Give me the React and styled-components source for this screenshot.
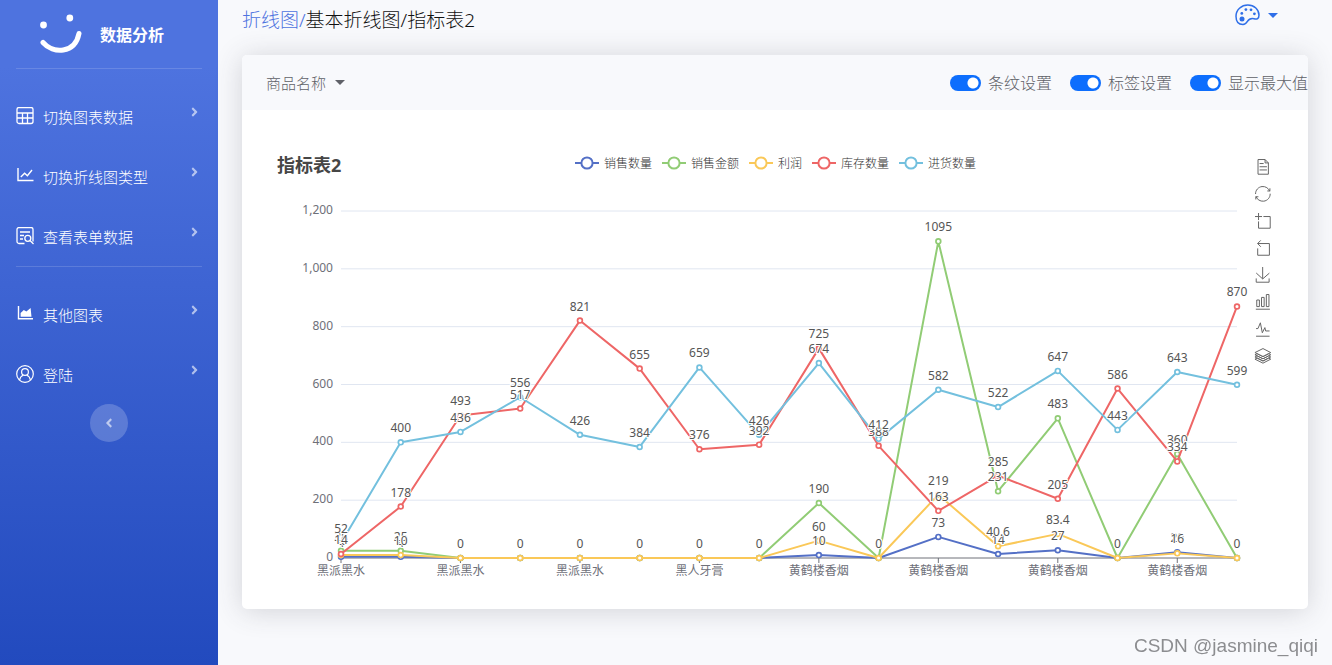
import React from 'react';
import styled, { createGlobalStyle } from 'styled-components';
import { FaAngleLeft, FaAngleRight } from 'react-icons/fa';

const categories = [
  '黑派黑水', '黑派黑水', '黑派黑水', '黑派黑水',
  '黑派黑水', '黑派黑水', '黑人牙膏', '黑人牙膏',
  '黄鹤楼香烟', '黄鹤楼香烟', '黄鹤楼香烟', '黄鹤楼香烟',
  '黄鹤楼香烟', '黄鹤楼香烟', '黄鹤楼香烟', '黄鹤楼香烟',
];

const series = [
  {
    name: '销售数量',
    color: '#5470c6',
    data: [4, 4, 0, 0, 0, 0, 0, 0, 10, 0, 73, 14, 27, 0, 20, 0],
  },
  {
    name: '销售金额',
    color: '#91cc75',
    data: [25, 25, 0, 0, 0, 0, 0, 0, 190, 0, 1095, 231, 483, 0, 360, 0],
  },
  {
    name: '利润',
    color: '#fac858',
    data: [10, 10, 0, 0, 0, 0, 0, 0, 60, 0, 219, 40.6, 83.4, 0, 16, 0],
  },
  {
    name: '库存数量',
    color: '#ee6666',
    data: [14, 178, 493, 517, 821, 655, 376, 392, 725, 388, 163, 285, 205, 586, 334, 870],
  },
  {
    name: '进货数量',
    color: '#73c0de',
    data: [52, 400, 436, 556, 426, 384, 659, 426, 674, 412, 582, 522, 647, 443, 643, 599],
  },
];

const tools = [
  {
    title: '数据视图',
    d: 'M17.5,17.3H33 M45.4,29.5h-28 M11.5,2v56H51V14.8L38.4,2H11.5z M38.4,2.2v12.7H51 M45.4,41.7h-28',
  },
  {
    title: '还原',
    d: 'M47,18.9h9.8V8.7 M56.3,20.1C52.1,9,40.5,0.6,26.8,2.1C12.6,3.7,1.6,16.2,2.1,30.6 M13,41.1H3.1v10.2 M3.7,39.9c4.2,11.1,15.8,19.5,29.5,18c14.2-1.6,25.2-14.1,24.7-28.5',
  },
  {
    title: '区域缩放',
    d: 'M0,13.5h26.9 M13.5,26.9V0 M32.1,13.5H58V58H13.5V32.1',
  },
  {
    title: '区域缩放还原',
    d: 'M22,1.4L9.9,13.5l12.3,12.3 M10.3,13.5H54.9v44.6H10.3v-26',
  },
  {
    title: '保存为图片',
    d: 'M4.7,22.9L29.3,45.5L54.7,23.4 M4.6,43.6L4.6,58L53.8,58L53.8,43.6 M29.2,45.1L29.2,0',
  },
  {
    title: '切换为柱状图',
    d: 'M6.7,22.9h10V48h-10V22.9z M24.9,13h10v35h-10V13z M43.2,2h10v46h-10V2z M3.1,58h53.7',
  },
  {
    title: '切换为折线图',
    d: 'M4.1,28.9h7.1l9.3-22l7.4,38l9.7-19.7l3,12.8h14.9 M4.1,58h51.4',
  },
  {
    title: '切换为堆叠',
    d: 'M8.2,38.4l-8.4,4.1l30.6,15.3L60,42.5l-8.1-4.1l-21.5,11L8.2,38.4z M51.9,30l-8.1,4.2l-13.4,6.9l-13.9-6.9L8.2,30l-8.4,4.2l8.4,4.2l22.2,11l21.5-11l8.1-4.2L51.9,30z M51.9,21.7l-8.1,4.2L35.7,30l-5.3,2.8L24.9,30l-8.4-4.1l-8.3-4.2l-8.4,4.2L8.2,30l8.3,4.2l13.9,6.9l13.4-6.9l8.1-4.2l8.1-4.1L51.9,21.7z M30.4,2.2L-0.2,17.5l8.4,4.1l8.3,4.2l8.4,4.2l5.5,2.7l5.3-2.7l8.1-4.2l8.1-4.2l8.1-4.1L30.4,2.2z',
  },
];

const switches = [
  { id: 'stripe', text: '条纹设置' },
  { id: 'label', text: '标签设置' },
  { id: 'max', text: '显示最大值' },
];

const TableIcon = () => (
  <svg width='18' height='18' viewBox='0 0 18 18' fill='none' stroke='currentColor' strokeWidth='1.3'>
    <rect x='1' y='0.5' width='16' height='16' rx='2' />
    <path d='M1 6h16 M1 11h16 M6.5 6v10.5 M11.5 6v10.5' />
  </svg>
);

const LineIcon = () => (
  <svg width='18' height='18' viewBox='0 0 18 18' fill='none' stroke='currentColor' strokeWidth='1.4'>
    <path d='M2 1v12.5h15.5' />
    <path d='M4.8 10L8.6 6.2l2.8 2.6 4.6-5.8' />
  </svg>
);

const AreaIcon = () => (
  <svg width='18' height='18' viewBox='0 0 18 18' fill='none' stroke='currentColor' strokeWidth='1.4'>
    <path d='M2.5 1v12.8H17' />
    <path d='M4.6 11.8V8l3.2-3 2.6 1.6L14.6 3l.9 8.8z' fill='currentColor' stroke='none' />
  </svg>
);

const FormSearchIcon = () => (
  <svg width='18' height='18' viewBox='0 0 18 18' fill='none' stroke='currentColor' strokeWidth='1.3'>
    <path d='M8.5 16.5H3a2 2 0 0 1-2-2v-12a2 2 0 0 1 2-2h12a2 2 0 0 1 2 2v12' />
    <path d='M4 5h10 M4 8.5h4 M4 12h3' />
    <circle cx='11.8' cy='11.3' r='3' />
    <path d='M14 13.5l3.5 3.5' />
  </svg>
);

const UserIcon = () => (
  <svg width='18' height='18' viewBox='0 0 18 18' fill='none' stroke='currentColor' strokeWidth='1.2'>
    <circle cx='9' cy='9' r='8.3' />
    <circle cx='9' cy='7' r='3.4' />
    <path d='M3.6 15c.4-2.4 1.8-4 3.6-4.7 M14.4 15c-.4-2.4-1.8-4-3.6-4.7' />
  </svg>
);

const PaletteIcon = () => (
  <svg width='25' height='22' viewBox='0 0 25 22' fill='none'>
    <path
      d='M8 20.5C3 20.5 1 16.5 1 12.2C1 6 6.4 1 12.8 1C19.3 1 24 5.6 24 11C24 14.8 22 15.4 19 14.7C15.6 13.9 14 15 12.4 17.4C11.2 19.4 10 20.5 8 20.5Z'
      stroke='currentColor'
      strokeWidth='1.5'
    />
    <g fill='currentColor'>
      <circle cx='7' cy='15' r='2.5' />
      <circle cx='6.8' cy='9.4' r='1.4' />
      <circle cx='10.9' cy='5.6' r='1.4' />
      <circle cx='16' cy='5.8' r='1.4' />
      <circle cx='19.4' cy='9.8' r='1.4' />
    </g>
  </svg>
);

const SmileLogo = () => (
  <svg width='42' height='42' viewBox='0 0 42 42' fill='none'>
    <circle cx='3.5' cy='12' r='3.4' fill='#fff' />
    <circle cx='29.8' cy='5' r='3.4' fill='#fff' />
    <path d='M3 29.5C13 41 35 41 39 20.5' stroke='#fff' strokeWidth='5' strokeLinecap='round' />
  </svg>
);

const NavEntry = ({ icon, text }) => (
  <NavButton type='button'>
    {icon}
    <span>{text}</span>
    <FaAngleRight className='arrow' />
  </NavButton>
);

// 绘图区坐标
const LEFT = 64;
const RIGHT = 960;
const BOTTOM = 358;
const HEIGHT = 347;
const MAX = 1200;
const xOf = (i) => LEFT + ((RIGHT - LEFT) * i) / (categories.length - 1);
const yOf = (v) => BOTTOM - (HEIGHT * v) / MAX;

const LineChart = () => (
  <Plot viewBox='0 0 974 390' role='img' aria-label='指标表2'>
    {[0, 200, 400, 600, 800, 1000, 1200].map((v) => (
      <g key={v}>
        {v > 0 && <line className='split' x1={LEFT} x2={RIGHT} y1={yOf(v)} y2={yOf(v)} />}
        <text className='axis' x={LEFT - 8} y={yOf(v) + 3} textAnchor='end'>
          {v.toLocaleString('en-US')}
        </text>
      </g>
    ))}
    <line className='base' x1={LEFT} x2={RIGHT} y1={BOTTOM} y2={BOTTOM} />
    {categories.map(
      (name, i) =>
        i % 2 === 0 && (
          <g key={i}>
            <line className='base' x1={xOf(i)} x2={xOf(i)} y1={BOTTOM} y2={BOTTOM + 5} />
            <text className='axis' x={xOf(i)} y={BOTTOM + 17} textAnchor='middle'>
              {name}
            </text>
          </g>
        )
    )}
    {series.map((s) => (
      <g key={s.name} stroke={s.color} strokeWidth='2'>
        <polyline
          fill='none'
          strokeLinejoin='bevel'
          points={s.data.map((v, i) => `${xOf(i)},${yOf(v)}`).join(' ')}
        />
        {s.data.map((v, i) => (
          <circle key={i} cx={xOf(i)} cy={yOf(v)} r='2.4' fill='#fff' strokeWidth='1.7' />
        ))}
      </g>
    ))}
    {/* 数值标签盖在所有折线之上 */}
    {series.map((s) =>
      s.data.map((v, i) => (
        <text className='value' key={s.name + i} x={xOf(i)} y={yOf(v) - 10} textAnchor='middle'>
          {v}
        </text>
      ))
    )}
  </Plot>
);

const App = () => {
  return (
    <>
      <GlobalStyle />
      <Page>
        <Sidebar>
          <Brand href='#'>
            <SmileLogo />
            数据分析
          </Brand>
          <Divider />
          <NavGroup>
            <NavEntry icon={<TableIcon />} text='切换图表数据' />
            <NavEntry icon={<LineIcon />} text='切换折线图类型' />
            <NavEntry icon={<FormSearchIcon />} text='查看表单数据' />
          </NavGroup>
          <Divider />
          <NavGroup>
            <NavEntry icon={<AreaIcon />} text='其他图表' />
            <NavEntry icon={<UserIcon />} text='登陆' />
          </NavGroup>
          <CollapseButton type='button' aria-label='收起'>
            <FaAngleLeft size={14} />
          </CollapseButton>
        </Sidebar>
        <Main>
          <TopBar>
            <Breadcrumb>
              <a href='#'>折线图/</a>
              基本折线图/指标表2
            </Breadcrumb>
            <ThemeButton type='button' aria-label='主题'>
              <PaletteIcon />
              <Caret />
            </ThemeButton>
          </TopBar>
          <Card>
            <CardHeader>
              <DropdownButton type='button' aria-haspopup='true'>
                商品名称
                <Caret />
              </DropdownButton>
              <SwitchGroup>
                {switches.map((item) => (
                  <SwitchItem key={item.id} htmlFor={item.id}>
                    <Switch id={item.id} type='checkbox' defaultChecked />
                    {item.text}
                  </SwitchItem>
                ))}
              </SwitchGroup>
            </CardHeader>
            <CardBody>
              <ChartHead>
                <ChartTitle>指标表2</ChartTitle>
                <Legend>
                  {series.map((s) => (
                    <li key={s.name}>
                      <svg width='24' height='14' viewBox='0 0 24 14' stroke={s.color} strokeWidth='2'>
                        <path d='M0 7h24' />
                        <circle cx='12' cy='7' r='5.6' fill='#fff' />
                      </svg>
                      {s.name}
                    </li>
                  ))}
                </Legend>
              </ChartHead>
              <LineChart />
              <Toolbox>
                {tools.map((tool) => (
                  <ToolButton key={tool.title} type='button' aria-label={tool.title}>
                    <svg width='16' height='16' viewBox='0 0 61 61'>
                      <path d={tool.d} vectorEffect='non-scaling-stroke' />
                    </svg>
                  </ToolButton>
                ))}
              </Toolbox>
            </CardBody>
          </Card>
        </Main>
        <Watermark>CSDN @jasmine_qiqi</Watermark>
      </Page>
    </>
  );
};

const GlobalStyle = createGlobalStyle`
  * {
    box-sizing: border-box;
  }
  body {
    margin: 0;
    background: #f8f9fc;
    font-family: 'Noto Sans', 'Noto Sans CJK SC', sans-serif;
    font-weight: 300;
  }
  button {
    padding: 0;
    border: 0;
    background: none;
    font-family: inherit;
    font-weight: inherit;
    cursor: pointer;
  }
  a {
    text-decoration: none;
  }
`;

const Page = styled.div`
  display: flex;
  min-height: 100vh;
`;

const Sidebar = styled.nav`
  display: flex;
  flex-direction: column;
  flex: none;
  width: 218px;
  padding: 0 16px;
  background: linear-gradient(180deg, #4e73df 10%, #224abe 100%);
`;

const Brand = styled.a`
  display: flex;
  align-items: center;
  gap: 18px;
  height: 68px;
  padding-left: 24px;
  font-size: 16px;
  font-weight: bold;
  color: #fff;
`;

const Divider = styled.hr`
  width: 100%;
  height: 1px;
  margin: 0;
  border: 0;
  background: rgba(255, 255, 255, 0.15);
`;

const NavGroup = styled.div`
  padding-top: 17px;
`;

const NavButton = styled.button`
  display: flex;
  align-items: center;
  gap: 9px;
  width: 100%;
  height: 60px;
  font-size: 15px;
  color: #fff;
  .arrow {
    height: 14px;
    margin: 0 0 8px auto;
    color: rgba(255, 255, 255, 0.6);
  }
`;

const CollapseButton = styled.button`
  display: flex;
  align-items: center;
  justify-content: center;
  align-self: center;
  width: 38px;
  height: 38px;
  border-radius: 50%;
  background: rgba(255, 255, 255, 0.2);
  color: rgba(255, 255, 255, 0.6);
`;

const Main = styled.main`
  flex: 1;
  min-width: 0;
  padding: 0 24px 24px;
`;

const TopBar = styled.header`
  display: flex;
  align-items: flex-start;
  justify-content: space-between;
  height: 55px;
  padding: 4px 30px 0 0;
`;

const Breadcrumb = styled.div`
  font-size: 19px;
  line-height: 32px;
  color: #111;
  a {
    color: #4e73df;
  }
`;

const ThemeButton = styled.button`
  display: flex;
  align-items: center;
  gap: 8px;
  color: #2f6fe8;
`;

const Caret = styled.span`
  border-top: 5px solid;
  border-right: 5px solid transparent;
  border-left: 5px solid transparent;
`;

const Card = styled.section`
  overflow: hidden;
  border-radius: 5px;
  background: #fff;
  box-shadow: 0 2px 28px rgba(58, 59, 69, 0.2);
`;

const CardHeader = styled.div`
  display: flex;
  align-items: center;
  justify-content: space-between;
  height: 55px;
  padding-left: 24px;
  background: #f8f9fc;
`;

const DropdownButton = styled.button`
  display: flex;
  align-items: center;
  gap: 9px;
  font-size: 15px;
  color: #5f6168;
`;

const SwitchGroup = styled.div`
  display: flex;
  gap: 18px;
`;

const SwitchItem = styled.label`
  display: flex;
  align-items: center;
  gap: 7px;
  font-size: 16px;
  line-height: 22px;
  color: #5f6168;
  white-space: nowrap;
`;

const Switch = styled.input`
  appearance: none;
  width: 31px;
  height: 16px;
  margin: 0;
  border-radius: 8px;
  background: #adb5bd radial-gradient(circle at 8px 8px, #fff 5px, transparent 6px);
  &:checked {
    background: #0d6efd radial-gradient(circle at 23px 8px, #fff 5px, transparent 6px);
  }
`;

const CardBody = styled.div`
  display: grid;
  grid-template-columns: 1fr 19px;
  column-gap: 4px;
  padding: 43px 34px 19px 35px;
`;

const ChartHead = styled.div`
  display: grid;
  grid-template-columns: 1fr auto 1fr;
  grid-area: 1 / 1 / 2 / 3;
  height: 47px;
`;

const ChartTitle = styled.h2`
  margin: 0;
  font-size: 18px;
  line-height: 24px;
  color: #464646;
`;

const Legend = styled.ul`
  display: flex;
  gap: 10px;
  margin: 0;
  padding: 0;
  list-style: none;
  li {
    display: flex;
    align-items: center;
    gap: 5px;
    height: 20px;
    font-size: 12px;
    color: #333;
  }
`;

const Plot = styled.svg`
  grid-area: 2 / 1 / 3 / 2;
  display: block;
  width: 100%;
  font-size: 12px;
  font-weight: 400;
  .split {
    stroke: #e0e6f1;
  }
  .base {
    stroke: #6e7079;
  }
  .axis {
    fill: #6e7079;
  }
  .value {
    fill: #555;
    stroke: #fff;
    stroke-width: 2px;
    paint-order: stroke;
  }
`;

const Toolbox = styled.div`
  grid-area: 1 / 2 / 3 / 3;
  display: flex;
  flex-direction: column;
  gap: 11px;
  padding-top: 6px;
`;

const ToolButton = styled.button`
  width: 16px;
  height: 16px;
  svg {
    display: block;
    overflow: visible;
    fill: none;
    stroke: #666;
  }
`;

const Watermark = styled.div`
  position: fixed;
  right: 14px;
  bottom: 8px;
  font-family: 'Liberation Sans', sans-serif;
  font-size: 19px;
  font-weight: 400;
  color: #8c8d90;
`;

export default App;
